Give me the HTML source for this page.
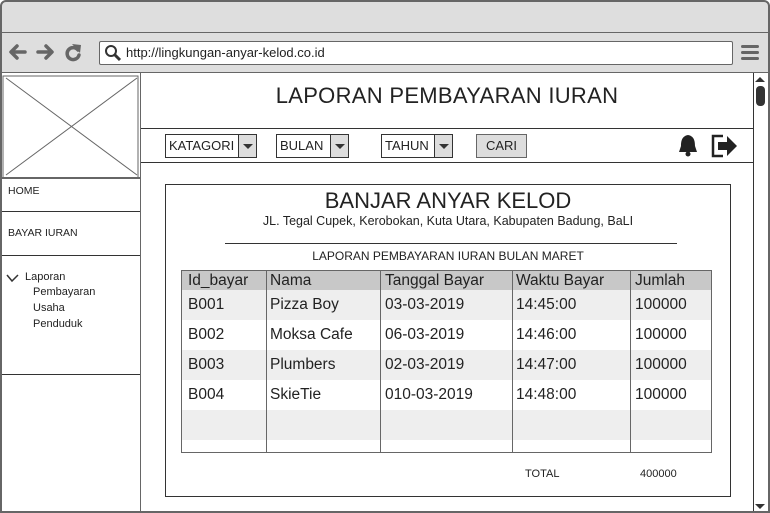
<!DOCTYPE html>
<html><head><meta charset="utf-8"><style>
*{margin:0;padding:0;box-sizing:border-box}
body{width:770px;height:513px;overflow:hidden;background:#fff;font-family:"Liberation Sans",sans-serif;color:#222;position:relative}
.a{position:absolute;white-space:nowrap}
.frame{left:0;top:0;width:770px;height:513px;border:2px solid #666;border-radius:6px 6px 0 0;background:#dedede}
.dd{position:absolute;height:24px;border:1px solid #333;background:#fff;font-size:13px;line-height:22px;padding-left:3px;white-space:nowrap}
.dd .b{position:absolute;right:0;top:0;width:18px;height:22px;border-left:1px solid #333;background:#ddd}
.dd .b:after{content:"";position:absolute;left:4px;top:9px;border-left:5px solid transparent;border-right:5px solid transparent;border-top:5px solid #333}
.row{position:absolute;left:182px;width:529px;height:30px}
.t{position:absolute;font-size:15.5px;line-height:30px;white-space:nowrap}
.vl{position:absolute;top:270px;width:1px;height:183px;background:#666}
</style></head><body>
<div class="a frame"></div>
<div class="a" style="left:2px;top:32px;width:766px;height:1px;background:#666"></div>
<svg class="a" style="left:8px;top:42px" width="80" height="20">
<g stroke="#666" stroke-width="3.5" fill="none" stroke-linecap="round" stroke-linejoin="round">
<path d="M4 10 H17 M9 4 L3 10 L9 16"/>
<path d="M30 10 H43 M38 4 L44 10 L38 16"/>
<path d="M70 8 A6 6 0 1 0 71 13"/>
</g>
<path d="M64 2 L73 3 L72 11 Z" fill="#666"/>
</svg>
<div class="a" style="left:99px;top:41px;width:634px;height:24px;border:1px solid #666;background:#fff;border-radius:2px"></div>
<svg class="a" style="left:104px;top:44px" width="18" height="18"><circle cx="7" cy="7" r="5" fill="none" stroke="#333" stroke-width="2"/><path d="M11 11 L16 16" stroke="#333" stroke-width="3"/></svg>
<div class="a" style="left:126px;top:44px;font-size:13px;line-height:18px">http://lingkungan-anyar-kelod.co.id</div>
<div class="a" style="left:741px;top:45px;width:18px;height:3px;background:#666;border-radius:2px"></div>
<div class="a" style="left:741px;top:51px;width:18px;height:3px;background:#666;border-radius:2px"></div>
<div class="a" style="left:741px;top:57px;width:18px;height:3px;background:#666;border-radius:2px"></div>
<div class="a" style="left:2px;top:72px;width:766px;height:1px;background:#666"></div>
<div class="a" style="left:2px;top:73px;width:766px;height:438px;background:#fff"></div>
<div class="a" style="left:140px;top:73px;width:1px;height:438px;background:#666"></div>
<svg class="a" style="left:2px;top:73px" width="138" height="106"><rect x="1" y="3" width="135" height="102" fill="none" stroke="#666" stroke-width="1"/><path d="M4 5 L135 102 M135 5 L4 102" stroke="#666"/><line x1="0" y1="105" x2="138" y2="105" stroke="#666" stroke-width="2"/></svg>
<div class="a" style="left:8px;top:185px;font-size:10.5px">HOME</div>
<div class="a" style="left:2px;top:211px;width:138px;height:1px;background:#333"></div>
<div class="a" style="left:8px;top:227px;font-size:10.5px">BAYAR IURAN</div>
<div class="a" style="left:2px;top:255px;width:138px;height:1px;background:#333"></div>
<svg class="a" style="left:6px;top:273px" width="14" height="10"><path d="M1 2 L6 8 L12 2" fill="none" stroke="#333" stroke-width="1.5"/></svg>
<div class="a" style="left:25px;top:270px;font-size:11px;line-height:15px">Laporan</div>
<div class="a" style="left:33px;top:284px;font-size:11px;line-height:16px">Pembayaran<br>Usaha<br>Penduduk</div>
<div class="a" style="left:2px;top:374px;width:138px;height:1px;background:#333"></div>
<div class="a" style="left:141px;top:82px;width:612px;text-align:center;font-size:22px;line-height:28px;letter-spacing:.3px">LAPORAN PEMBAYARAN IURAN</div>
<div class="a" style="left:141px;top:128px;width:612px;height:1px;background:#333"></div>
<div class="a" style="left:141px;top:162px;width:612px;height:1px;background:#333"></div>
<div class="dd" style="left:165px;top:134px;width:92px">KATAGORI<span class="b"></span></div>
<div class="dd" style="left:276px;top:134px;width:73px">BULAN<span class="b"></span></div>
<div class="dd" style="left:381px;top:134px;width:72px">TAHUN<span class="b"></span></div>
<div class="a" style="left:476px;top:134px;width:51px;height:24px;border:1px solid #666;background:#ddd;font-size:13px;line-height:22px;text-align:center">CARI</div>
<svg class="a" style="left:676px;top:133px" width="64" height="26">
<path d="M12 2 C6 3 5 8 5 13 L3 19 L21 19 L19 13 C19 8 18 3 12 2 Z" fill="#222"/><circle cx="12" cy="21" r="2.5" fill="#222"/>
<path d="M47 3 L37 3 L37 23 L47 23" fill="none" stroke="#222" stroke-width="2.5"/>
<path d="M42 9 L51 9 L51 3 L61 13 L51 23 L51 17 L42 17 Z" fill="#222"/>
</svg>
<div class="a" style="left:753px;top:73px;width:1px;height:438px;background:#333"></div>
<div class="a" style="left:755px;top:77px;border-left:5px solid transparent;border-right:5px solid transparent;border-bottom:5px solid #333"></div>
<div class="a" style="left:756px;top:86px;width:9px;height:20px;background:#333;border-radius:4px"></div>
<div class="a" style="left:755px;top:504px;border-left:5px solid transparent;border-right:5px solid transparent;border-top:5px solid #333"></div>
<div class="a" style="left:165px;top:184px;width:566px;height:313px;border:1px solid #333"></div>
<div class="a" style="left:165px;top:187px;width:566px;text-align:center;font-size:22px;line-height:28px">BANJAR ANYAR KELOD</div>
<div class="a" style="left:165px;top:213px;width:566px;text-align:center;font-size:12.5px;line-height:16px">JL. Tegal Cupek, Kerobokan, Kuta Utara, Kabupaten Badung, BaLI</div>
<div class="a" style="left:225px;top:243px;width:452px;height:1px;background:#333"></div>
<div class="a" style="left:165px;top:248px;width:566px;text-align:center;font-size:12px;line-height:16px">LAPORAN PEMBAYARAN IURAN BULAN MARET</div>
<div class="a" style="left:181px;top:270px;width:531px;height:183px;border:1px solid #666"></div>
<div class="row" style="top:271px;height:19px;background:#c8c8c8"></div>
<div class="row" style="top:290px;background:#eee"></div>
<div class="row" style="top:350px;background:#eee"></div>
<div class="row" style="top:410px;background:#eee"></div>
<div class="vl" style="left:266px"></div><div class="vl" style="left:380px"></div><div class="vl" style="left:512px"></div><div class="vl" style="left:630px"></div>
<div class="a" style="left:0;top:266px">
<div class="t" style="left:188px">Id_bayar</div><div class="t" style="left:270px">Nama</div><div class="t" style="left:385px">Tanggal Bayar</div><div class="t" style="left:516px">Waktu Bayar</div><div class="t" style="left:635px">Jumlah</div>
</div>
<div class="a" style="left:0;top:290px">
<div class="t" style="left:188px">B001</div><div class="t" style="left:270px">Pizza Boy</div><div class="t" style="left:385px">03-03-2019</div><div class="t" style="left:516px">14:45:00</div><div class="t" style="left:635px">100000</div>
</div>
<div class="a" style="left:0;top:320px">
<div class="t" style="left:188px">B002</div><div class="t" style="left:270px">Moksa Cafe</div><div class="t" style="left:385px">06-03-2019</div><div class="t" style="left:516px">14:46:00</div><div class="t" style="left:635px">100000</div>
</div>
<div class="a" style="left:0;top:350px">
<div class="t" style="left:188px">B003</div><div class="t" style="left:270px">Plumbers</div><div class="t" style="left:385px">02-03-2019</div><div class="t" style="left:516px">14:47:00</div><div class="t" style="left:635px">100000</div>
</div>
<div class="a" style="left:0;top:380px">
<div class="t" style="left:188px">B004</div><div class="t" style="left:270px">SkieTie</div><div class="t" style="left:385px">010-03-2019</div><div class="t" style="left:516px">14:48:00</div><div class="t" style="left:635px">100000</div>
</div>
<div class="a" style="left:525px;top:468px;font-size:11px">TOTAL</div>
<div class="a" style="left:640px;top:468px;font-size:11px">400000</div>
</body></html>
